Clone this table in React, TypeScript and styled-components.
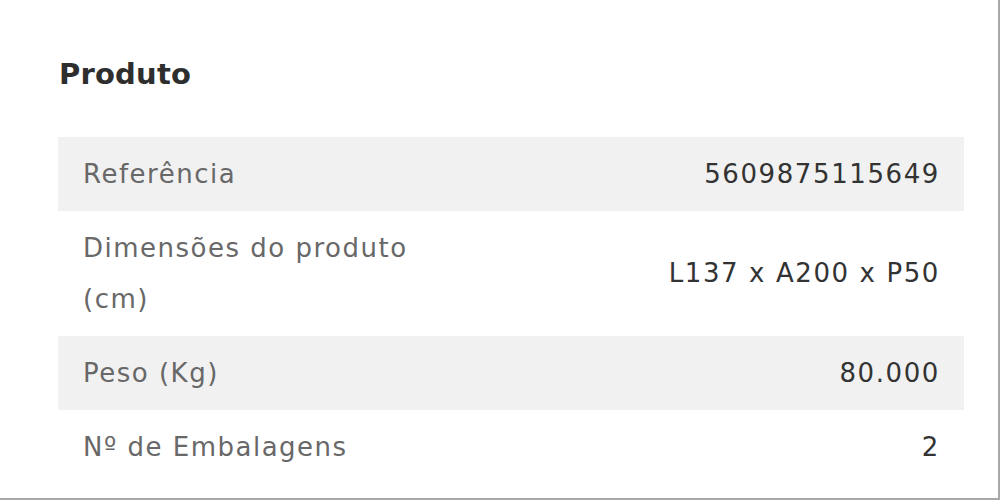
import React from 'react';
import styled, { createGlobalStyle } from 'styled-components';

const GlobalStyle = createGlobalStyle`
  html, body {
    margin: 0;
    padding: 0;
    background: #ffffff;
  }
  body {
    font-family: "DejaVu Sans", "Noto Sans", sans-serif;
  }
`;

const Frame = styled.div`
  box-sizing: border-box;
  width: 1000px;
  height: 500px;
  border-right: 2px solid #a8a8a8;
  border-bottom: 2px solid #a8a8a8;
  padding: 52px 34px 0 58px;
  overflow: hidden;
`;

const Title = styled.h2`
  margin: 0 0 0 1px;
  font-size: 29px;
  line-height: 44px;
  font-weight: 600;
  letter-spacing: 0.2px;
  color: #2e2e2e;
`;

const Table = styled.div`
  margin-top: 41px;
  display: flex;
  flex-direction: column;
`;

const Row = styled.div<{ $shaded?: boolean }>`
  display: flex;
  align-items: center;
  justify-content: space-between;
  padding: 11.5px 24px 11.5px 25px;
  background: ${(p) => (p.$shaded ? '#f1f1f1' : 'transparent')};
`;

const Label = styled.div`
  max-width: 360px;
  font-size: 26px;
  line-height: 51px;
  letter-spacing: 1.5px;
  color: #686868;
`;

const Value = styled.div`
  font-size: 26px;
  line-height: 51px;
  letter-spacing: 1.6px;
  color: #333333;
  text-align: right;
`;

const specs = [
  { label: 'Referência', value: '5609875115649' },
  { label: 'Dimensões do produto (cm)', value: 'L137 x A200 x P50' },
  { label: 'Peso (Kg)', value: '80.000' },
  { label: 'Nº de Embalagens', value: '2' },
];

export default function App() {
  return (
    <>
      <GlobalStyle />
      <Frame>
        <Title>Produto</Title>
        <Table>
          {specs.map((s, i) => (
            <Row key={s.label} $shaded={i % 2 === 0}>
              <Label>{s.label}</Label>
              <Value>{s.value}</Value>
            </Row>
          ))}
        </Table>
      </Frame>
    </>
  );
}
